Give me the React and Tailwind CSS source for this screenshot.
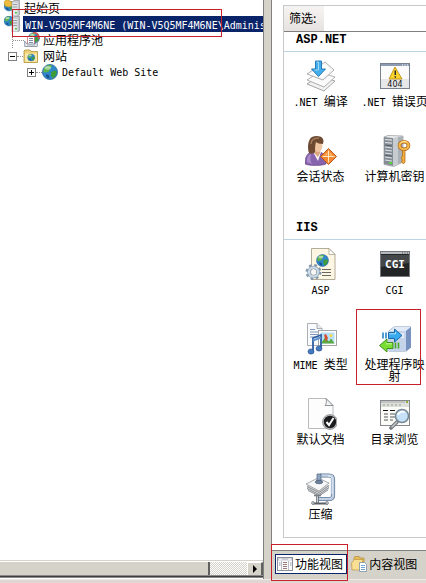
import React, { useState } from 'react';

// Latin runs are set in a mono face, half the width of a Chinese character
const Text = ({ children }) =>
  children.split(/([\x20-\x7e]+)/).filter(Boolean).map((part, i) =>
    /^[\x20-\x7e]+$/.test(part)
      ? <span key={i} className="font-['DejaVu_Sans_Mono',monospace] text-[10px]">{part}</span>
      : <span key={i}>{part}</span>
  );

/* ---------- small icons ---------- */

const Globe = ({ cx = 8, cy = 8, r = 7 }) => (
  <g transform={`translate(${cx} ${cy}) scale(${r / 7})`}>
    <circle r="7" fill="#2f86c8" stroke="#1d5d94" strokeWidth="0.6" />
    <path d="M-5.5-3.5C-3-7 1-7 2-5.5L0-3l-1 2.500-3 1L-6.3 0z" fill="#5fb548" />
    <path d="M1 0l3.500-1.500L6.500 0 5 4 2 6 1 3z" fill="#3f9c3b" />
    <path d="M-4 2l3 1 .5 3L-3 5z" fill="#164f8c" />
    <ellipse cx="-2" cy="-4" rx="3" ry="1.600" fill="#fff" opacity="0.5" />
  </g>
);

const ServerIcon = ({ start }) => (
  <svg className="h-4 w-4 shrink-0" viewBox="0 0 16 16">
    <Globe cx={5} cy={start ? 6 : 5} r={5} />
    {start && <path d="M0 2l2-2h3l1 1.500h2V6l-3 1-4-1z" fill="#f0bd3c" stroke="#bb8a22" strokeWidth="0.5" />}
    <path d="M8 2l2-1.500h5.500V15l-1.500 1H8z" fill="#c3c7cb" stroke="#7f858b" strokeWidth="0.6" />
    <path d="M8.300 2.500h5.200v13H8.300z" fill="#e3e6e8" />
    <path d="M9 4.500h4M9 7h4M9 9.500h4" stroke="#8b9299" strokeWidth="0.9" />
    <rect x="11" y="12" width="2" height="1.500" fill="#52c54a" />
  </svg>
);

const PoolIcon = () => (
  <svg className="h-4 w-4 shrink-0" viewBox="0 0 16 16">
    <Globe cx={10} cy={6} r={5.5} />
    <path d="M9 1c4-1 6 2 6 6" fill="none" stroke="#d65449" strokeWidth="1.6" />
    <path d="M3.500 4.500h7v8h-7z" fill="#fff" stroke="#c0605a" strokeWidth="0.7" />
    <path d="M5 6.500h4M5 8.500h4M5 10.500h4" stroke="#5c6f92" strokeWidth="0.8" />
    <path d="M.7 9v5.500h12.600V9l-2 3H3z" fill="#e9edf2" stroke="#7c8797" strokeWidth="0.8" />
    <path d="M3 13h8" stroke="#a8b2c0" />
  </svg>
);

const SitesIcon = () => (
  <svg className="h-4 w-4 shrink-0" viewBox="0 0 16 16">
    <path d="M1 3l1-1h5l1 1.500h6.500v11H1z" fill="#eed178" stroke="#b38f36" strokeWidth="0.8" />
    <path d="M2 5.500h12v8.400H2z" fill="#faeaa9" />
    <Globe cx={8.2} cy={9.5} r={3.6} />
  </svg>
);

const SiteIcon = () => (
  <svg className="h-4 w-4 shrink-0" viewBox="0 0 16 16"><Globe r={7.6} /></svg>
);

const FeaturesIcon = () => (
  <svg className="h-4 w-4 shrink-0" viewBox="0 0 16 16">
    <rect x="0.5" y="1.5" width="15" height="13" fill="#fbfbfc" stroke="#8b8e98" />
    <path d="M1 2h14v2.500H1z" fill="#c9ccd6" />
    <path d="M4.500 5v9M11.500 5v9" stroke="#a9acb7" strokeWidth="0.8" />
    <path d="M6 6.500h4M6 8.500h4M6 10.500h4M6 12.500h4" stroke="#8d6d69" strokeWidth="0.9" />
    <path d="M2 7h1.500M2 9h1.500M13 7h1.500M13 9h1.500" stroke="#7d8da8" strokeWidth="0.9" />
    <path d="M2 3.200h3M11 3.200h3" stroke="#fff" />
  </svg>
);

const ContentIcon = () => (
  <svg className="h-4 w-4 shrink-0" viewBox="0 0 16 16">
    <path d="M3 2l1-1.500h4L9 2h4v9H3z" fill="#e6bd59" stroke="#b58a35" strokeWidth="0.7" />
    <path d="M.5 7l3-3.500H12L10 14H1z" fill="#f8df94" stroke="#bb9546" strokeWidth="0.7" />
    <path d="M8.500 6.500h5l2 2v7h-7z" fill="#fff" stroke="#7c8ea8" strokeWidth="0.8" />
    <path d="M10 9.500h4M10 11.500h4M10 13.500h4" stroke="#4b8fc9" strokeWidth="0.8" />
  </svg>
);

/* ---------- feature icons, 32 x 32 ---------- */

const CompileIcon = () => (
  <>
    <path d="M2 24l12-8 16 5-11 10z" fill="#f1f1f1" stroke="#8f9192" strokeWidth="0.8" />
    <path d="M2 20l12-8 16 5-11 10z" fill="#fafafa" stroke="#9b9d9e" strokeWidth="0.8" />
    <path d="M2 14L20 2l9 8-11 10z" fill="#f5f5f5" stroke="#9b9d9e" strokeWidth="0.8" />
    <path d="M5 14L20 4l6 6-9 8z" fill="#fff" />
    <path d="M10.500 1h6v8h4L13.500 16.500l-7-7.500h4z" fill="#45adea" stroke="#1773b5" strokeWidth="0.9" />
    <path d="M11.500 2h2v8h-4" fill="none" stroke="#a4dcf9" strokeWidth="0.9" />
  </>
);

const ErrorPageIcon = () => (
  <>
    <rect x="1.5" y="3.5" width="29" height="25" fill="#fbfbfb" stroke="#78828f" />
    <path d="M2 4h28v2H2z" fill="#8c9bb0" />
    <path d="M23 5h1M25.500 5h1M28 5h1" stroke="#fff" />
    <path d="M2 19h28v9H2z" fill="#e5e7e9" />
    <path d="M16 7l7 12H10z" fill="#fbd52c" stroke="#bc8e10" strokeWidth="0.9" strokeLinejoin="round" />
    <path d="M16.300 10.500v4.500M16.300 16.200v1.500" stroke="#262626" strokeWidth="1.5" />
    <text x="16" y="27" textAnchor="middle" fontSize="8" fontFamily="DejaVu Sans" fill="#111">404</text>
  </>
);

const SessionIcon = () => (
  <>
    <path d="M0 29c0-7 2-11 7-12h8c4 1 6 5 6 12-5 2-16 2-21 0z" fill="#8763ad" stroke="#654388" strokeWidth="0.6" />
    <path d="M2 27c0-5 1-7 4-8-1 4-1 7 1 10z" fill="#a98bc9" />
    <path d="M8 17l5 9 3-9z" fill="#f7f3f0" />
    <path d="M9 14h6v4l-2 4-4-4z" fill="#d9a47c" />
    <path d="M9 6h8c1 5 0 11-4 11-3 0-5-4-4-11z" fill="#efc6a2" />
    <path d="M4 18C2 13 3 4 7 2c4-2 10-1 11 2 1 2 0 4 0 5-3 0-6-1-7-2-1 3-1 7-1 10-2 2-4 2-6 1z" fill="#6f4a33" />
    <path d="M6 9c0-4 3-6 8-6" fill="none" stroke="#a17c5c" strokeWidth="1.4" />
    <path d="M23.500 13.500l8 8-8 8-8-8z" fill="#f28734" stroke="#b94f10" strokeWidth="0.9" />
    <path d="M23.500 15.500v12M17.500 21.500h12" stroke="#fff0cf" strokeWidth="0.9" />
    <path d="M22.500 17v3.500H19zM24.500 17v3.500H28z" fill="#ffb65f" />
  </>
);

const MachineKeyIcon = () => (
  <>
    <path d="M5 2l4-1.500 15 .5v26l-9 4.500-10-2z" fill="#eef0f1" stroke="#7d8389" strokeWidth="0.6" />
    <path d="M5 2l9 1v28l-9-2z" fill="#858d94" />
    <path d="M14 3l10-2v26l-10 4z" fill="#c7ccd1" />
    <path d="M19 2l5-1v26l-5 2z" fill="#aab1b7" />
    <path d="M6 4.500l7 .7M6 7.500l7 .7M6 12l7 1M6 15l7 1M6 18l7 1M6 22l7 1M6 25l7 1" stroke="#dfe2e5" strokeWidth="1.200" />
    <path d="M6 10l7 1M6 20.200l7 1" stroke="#4f5860" strokeWidth="0.9" />
    <rect x="10" y="27" width="3" height="2" fill="#58d43c" />
    <path d="M26 14v13l-1.500 2-2-2 1-2-1.500-2 1.500-2v-7z" fill="#f4ae3c" stroke="#a86313" strokeWidth="0.7" />
    <ellipse cx="25" cy="10.5" rx="4.500" ry="3.800" fill="none" stroke="#a86313" strokeWidth="3.600" />
    <ellipse cx="25" cy="10.5" rx="4.500" ry="3.800" fill="none" stroke="#f6b84c" strokeWidth="2.300" />
    <path d="M21.500 8.500c1-2 4-2.500 6-1.500" fill="none" stroke="#ffe9ac" />
  </>
);

const AspIcon = () => (
  <>
    <path d="M6.500.5H24l6 6v25H6.500z" fill="#fdf6e2" stroke="#aaa38f" strokeWidth="0.9" />
    <path d="M24 .5v6h6z" fill="#fff" stroke="#aaa38f" strokeWidth="0.8" />
    <Globe cx={17.5} cy={12.5} r={6} />
    <path d="M17 21.500h9M17 24.500h9M17 27.500h9" stroke="#6a6761" strokeWidth="1.1" />
    <circle cx="8.5" cy="24" r="6.5" fill="none" stroke="#8498ac" strokeWidth="3" strokeDasharray="2.55 2.55" />
    <circle cx="8.5" cy="24" r="4.5" fill="none" stroke="#8fa5b9" strokeWidth="3.6" />
    <circle cx="8.5" cy="24" r="4.5" fill="none" stroke="#cfdbe6" strokeWidth="2" />
    <circle cx="8.5" cy="24" r="2.5" fill="#f7f7f4" />
  </>
);

const CgiIcon = () => (
  <>
    <rect x="1.5" y="3.5" width="29" height="25" fill="#222426" stroke="#777b80" />
    <path d="M2 4h28v2H2z" fill="#b6babe" />
    <path d="M23 5h1M25.500 5h1M28 5h1" stroke="#53585d" />
    <path d="M2 7h28v8L2 19z" fill="#45484b" />
    <text x="16" y="20" textAnchor="middle" fontSize="11" fontWeight="bold" fontFamily="DejaVu Sans Mono" fill="#fff">CGI</text>
  </>
);

const MimeIcon = () => (
  <>
    <path d="M2.500.5H12l5 5v17H2.500z" fill="#fafbfc" stroke="#a0a4aa" strokeWidth="0.9" />
    <path d="M12 .5v5h5" fill="#e9edf1" stroke="#a0a4aa" strokeWidth="0.9" />
    <path d="M5 6.500h5M5 9h9M5 11.500h9M5 14h8" stroke="#8298b6" />
    <rect x="13.5" y="7.5" width="18" height="15" fill="#fff" stroke="#a2a5a8" />
    <rect x="15.5" y="9.5" width="14" height="11" fill="#b6def6" />
    <path d="M16 20.500l4-6 4 4 2-3 3.500 5z" fill="#5aa83e" />
    <path d="M19 12l2-1 2 4-2 4z" fill="#d84c32" />
    <circle cx="26" cy="12.5" r="1.5" fill="#f8d847" />
    <path d="M8 28V15l8-3v13" fill="none" stroke="#2e5ea3" strokeWidth="1.8" />
    <path d="M8 17.500l8-3" stroke="#6495d0" strokeWidth="2" />
    <ellipse cx="6" cy="28.5" rx="3" ry="2.6" fill="#4479bd" stroke="#234e8a" strokeWidth="0.6" />
    <ellipse cx="14" cy="25.5" rx="3" ry="2.6" fill="#4479bd" stroke="#234e8a" strokeWidth="0.6" />
  </>
);

const HandlerIcon = () => (
  <>
    <path d="M10 8l5-4h17v20l-5 4H10z" fill="#8ea8d0" stroke="#6681aa" strokeWidth="0.8" />
    <path d="M10 8l5-4h17l-5 4z" fill="#e1eaf6" />
    <path d="M10 8h17v20H10z" fill="#c4d4eb" />
    <path d="M27 8l5-4v20l-5 4z" fill="#7892bf" />
    <path d="M12 10h13v5H12z" fill="#e2ebf7" />
    <path d="M9.500 9.500h6V6l7.500 6.500-7.500 6.500v-3.500h-6z" fill="#38aaf0" stroke="#155f9f" strokeWidth="0.9" />
    <path d="M4 9.500v6M7 9.500v6" stroke="#2385c8" strokeWidth="1.6" />
    <path d="M10 10.800h6.500V9" fill="none" stroke="#b4e4ff" strokeWidth="0.9" />
    <path d="M14 19.500H8V16l-7.500 6.500L8 29v-3.500h6z" fill="#7add32" stroke="#35851a" strokeWidth="0.9" />
    <path d="M16.500 19.500v6M19.500 19.500v6" stroke="#49a825" strokeWidth="1.6" />
    <path d="M13 20.800H7" stroke="#d0ffa7" strokeWidth="0.9" />
  </>
);

const DefaultDocIcon = () => (
  <>
    <path d="M3.500.5H21l7 7v23H3.500z" fill="#fdfdfd" stroke="#b0b2b4" strokeWidth="0.9" />
    <path d="M21 .5c1 3 0 6-1 7h8z" fill="#f2f3f4" stroke="#85888b" strokeWidth="0.9" />
    <circle cx="25" cy="24" r="7.5" fill="#b9bbbd" stroke="#85878a" strokeWidth="0.7" />
    <circle cx="25" cy="24" r="6.2" fill="#1b1d1f" />
    <path d="M21.500 24l2.500 3 4.500-7" fill="none" stroke="#fff" strokeWidth="2" />
  </>
);

const BrowseIcon = () => (
  <>
    <rect x="1.5" y="2.5" width="29" height="25" fill="#fbfbf8" stroke="#85898c" />
    <path d="M2 3h28v6H2z" fill="#dcdfdc" />
    <path d="M2 4h24" stroke="#a5aaa7" />
    <rect x="27" y="3" width="2" height="2" fill="#8caf36" />
    <path d="M4 7h2M8 7h2M12 7h2M16 7h2M20 7h2" stroke="#8aa17c" />
    <path d="M4 12.500h5M11 12.500h5" stroke="#111" strokeWidth="1.2" />
    <path d="M5 16h4M5 19h4M5 22h4M11 16h5M11 19h5M11 22h3" stroke="#55595b" />
    <path d="M18 24l-6 6" stroke="#6f7478" strokeWidth="3.5" strokeLinecap="round" />
    <path d="M18 24l-5.500 5.500" stroke="#c5c8ca" strokeWidth="1.5" />
    <circle cx="23" cy="18" r="6.5" fill="#c6e2f8" stroke="#778895" strokeWidth="1.5" />
    <path d="M19 17c1-3 4-4 7-3" fill="none" stroke="#fff" strokeWidth="1.6" />
  </>
);

const CompressIcon = () => (
  <>
    <path d="M2 16l12 7 10-7v-4H2z" fill="#d4d6d8" />
    <path d="M2 13.500l12 6 10-7M2 15.500l12 6 10-7M3 17.500l11 5.500 9-6" fill="none" stroke="#85888b" strokeWidth="0.9" />
    <path d="M1 11L13 5l11 5-10 8z" fill="#f7f7f7" stroke="#929597" strokeWidth="0.8" />
    <path d="M15 2.500h9c3 0 4 1 4 4V22c0 3-1 4-4 4H12" fill="none" stroke="#5e7898" strokeWidth="4.2" />
    <path d="M15 2.500h9c3 0 4 1 4 4V22c0 3-1 4-4 4H12" fill="none" stroke="#c2d2e4" strokeWidth="2.6" />
    <path d="M23 3c3.500 0 4 1 4 4v14" fill="none" stroke="#eef4fa" strokeWidth="0.9" />
    <path d="M12 1h4v7h-4z" fill="#8fa5bf" stroke="#4f6683" strokeWidth="0.7" />
    <ellipse cx="14" cy="9" rx="3.8" ry="1.8" fill="#6d829c" stroke="#43566e" strokeWidth="0.6" />
    <path d="M12.500 22v9" stroke="#666d74" strokeWidth="2.6" />
    <path d="M12.500 22v9" stroke="#d6dade" strokeWidth="0.9" />
    <path d="M9 22.500h7" stroke="#777e85" strokeWidth="1.6" />
    <path d="M8 30.500h14" stroke="#596067" strokeWidth="1.8" strokeLinecap="round" />
    <circle cx="8" cy="30" r="1.4" fill="#d6dade" stroke="#596067" strokeWidth="0.7" />
    <circle cx="22" cy="30" r="1.4" fill="#d6dade" stroke="#596067" strokeWidth="0.7" />
  </>
);

const sections = [
  {
    title: 'ASP.NET',
    items: [
      { label: '.NET 编译', icon: <CompileIcon /> },
      { label: '.NET 错误页', icon: <ErrorPageIcon /> },
      { label: '会话状态', icon: <SessionIcon /> },
      { label: '计算机密钥', icon: <MachineKeyIcon /> },
    ],
  },
  {
    title: 'IIS',
    items: [
      { label: 'ASP', icon: <AspIcon /> },
      { label: 'CGI', icon: <CgiIcon /> },
      { label: 'MIME 类型', icon: <MimeIcon /> },
      { label: '处理程序映射', icon: <HandlerIcon /> },
      { label: '默认文档', icon: <DefaultDocIcon /> },
      { label: '目录浏览', icon: <BrowseIcon /> },
      { label: '压缩', icon: <CompressIcon /> },
    ],
  },
];

const Expander = ({ open, label }) => (
  <button aria-label={label} aria-expanded={open} className="flex h-[9px] w-[9px] shrink-0 items-center justify-center border border-[#808080] bg-white">
    <svg className="h-[5px] w-[5px]" viewBox="0 0 5 5">
      <path d={open ? 'M0 2h5v1H0z' : 'M0 2h5v1H0zM2 0h1v5H2z'} fill="#000" />
    </svg>
  </button>
);

const Tree = () => (
  <ul className="flex-1 overflow-hidden whitespace-pre">
    <li className="flex h-4 items-center pl-1">
      <ServerIcon start />
      <span className="pl-1">起始页</span>
    </li>
    <li className="flex h-4 items-center pl-1">
      <ServerIcon />
      <span className="ml-[3px] h-4 flex-1 overflow-hidden bg-[#0a246a] pl-[2px] text-white">
        <Text>{'WIN-V5Q5MF4M6NE (WIN-V5Q5MF4M6NE\\Administrator)'}</Text>
      </span>
    </li>
    <li className="flex h-4 items-center pl-3">
      <span className="h-4 w-3 border-l border-dotted border-[#909090] pt-2">
        <span className="block border-t border-dotted border-[#909090]" />
      </span>
      <PoolIcon />
      <span className="pl-[3px]">应用程序池</span>
    </li>
    <li className="flex h-4 items-center pl-2">
      <Expander open label="网站" />
      <span className="w-[6px] border-t border-dotted border-[#909090]" />
      <SitesIcon />
      <span className="pl-1">网站</span>
    </li>
    <li className="flex h-4 items-center pl-[27px]">
      <Expander open={false} label="Default Web Site" />
      <span className="w-[6px] border-t border-dotted border-[#909090]" />
      <SiteIcon />
      <span className="pl-1"><Text>Default Web Site</Text></span>
    </li>
  </ul>
);

const ScrollBar = () => (
  <div className="flex h-[14px] border-t border-white bg-[repeating-conic-gradient(#d5d2ca_0_25%,#ffffff_0_50%)] bg-[length:2px_2px]">
    <div className="w-4/5 border-r-2 border-[#606060] bg-[#d5d2ca]" />
    <div className="flex-1" />
    <button aria-label="向右滚动" className="flex w-4 items-center justify-center border-t border-r-2 border-l border-t-white border-r-[#606060] border-l-white bg-[#d5d2ca]">
      <svg className="h-2 w-1" viewBox="0 0 4 8"><path d="M0 0l4 4-4 4z" fill="#000" /></svg>
    </button>
  </div>
);

const Section = ({ title, items }) => (
  <section>
    <h2 className="h-5 border-b border-[#bcd5e3] pl-3 font-['Liberation_Mono',monospace] text-[12px] leading-4 font-bold">
      {title}
    </h2>
    <div className="mt-2 mb-[10px] grid auto-rows-[75px] grid-cols-[73px_75px]">
      {items.map((item) => (
        <button key={item.label} className="flex flex-col items-center">
          <svg className="h-8 w-8 shrink-0" viewBox="0 0 32 32">{item.icon}</svg>
          <span className="mt-[3px] w-[68px] leading-3 whitespace-normal">
            <Text>{item.label}</Text>
          </span>
        </button>
      ))}
    </div>
  </section>
);

export default function App() {
  const [view, setView] = useState('features');

  return (
    <div className="relative flex h-screen flex-col overflow-hidden bg-[#d5d2ca] font-['Noto_Sans_CJK_SC',sans-serif] text-[12px] leading-4 text-black">
      <div className="flex min-h-0 flex-1">
        {/* Connections tree */}
        <aside className="flex w-[62%] shrink-0 flex-col border-r border-[#808080] bg-white">
          <Tree />
          <div className="border-t border-[#d5d2ca]"><ScrollBar /></div>
          <div className="h-[3px] border-y border-[#8a8a8a] bg-[#404040]" />
          <div className="h-px bg-white" />
        </aside>

        <div className="ml-[7px] flex min-w-0 flex-1 flex-col">
          <main className="flex min-h-0 flex-1 flex-col overflow-hidden border-b border-l border-[#808080] bg-white pt-[5px] pb-3 pl-[11px]">
            <div className="flex min-h-0 flex-1 flex-col overflow-hidden border border-r-0 border-[#c9c9c9]">
              <div className="flex h-[26px] shrink-0 border-b border-[#808080]">
                <label htmlFor="filter" className="w-10 shrink-0 bg-linear-to-b from-[#f6f4f3] to-[#e6e2e0] pt-1 pl-[5px] leading-4 whitespace-nowrap">
                  筛选:
                </label>
                <input id="filter" type="text" className="min-w-0 flex-1 bg-white outline-none" />
              </div>
              {sections.map((s) => <Section key={s.title} {...s} />)}
            </div>
          </main>

          {/* View switch */}
          <div className="flex h-7 shrink-0 items-start overflow-hidden pt-[3px] pl-1 whitespace-nowrap">
            <button
              onClick={() => setView('features')}
              className={`flex h-5 shrink-0 items-center gap-[2px] border px-px ${view === 'features' ? 'border-[#0a246a] bg-white' : 'border-transparent'}`}
            >
              <FeaturesIcon />
              <span className="pr-[2px]">功能视图</span>
            </button>
            <button
              onClick={() => setView('content')}
              className={`ml-[2px] flex h-5 shrink-0 items-center gap-[2px] border px-px ${view === 'content' ? 'border-[#0a246a] bg-white' : 'border-transparent'}`}
            >
              <ContentIcon />
              <span>内容视图</span>
            </button>
          </div>
        </div>
      </div>
      <div className="h-1 shrink-0 border-t border-[#eeeae7] bg-[#e0d6d2]" />

      {/* Red callout frames */}
      <div className="pointer-events-none absolute top-[9px] left-3 h-7 w-[210px] border border-[#c8202a]" />
      <div className="pointer-events-none absolute top-[309px] left-[356px] h-[76px] w-[65px] border border-[#c8202a]" />
      <div className="pointer-events-none absolute top-[544px] left-[271px] h-[37px] w-[77px] border border-[#c8202a]" />
    </div>
  );
}
